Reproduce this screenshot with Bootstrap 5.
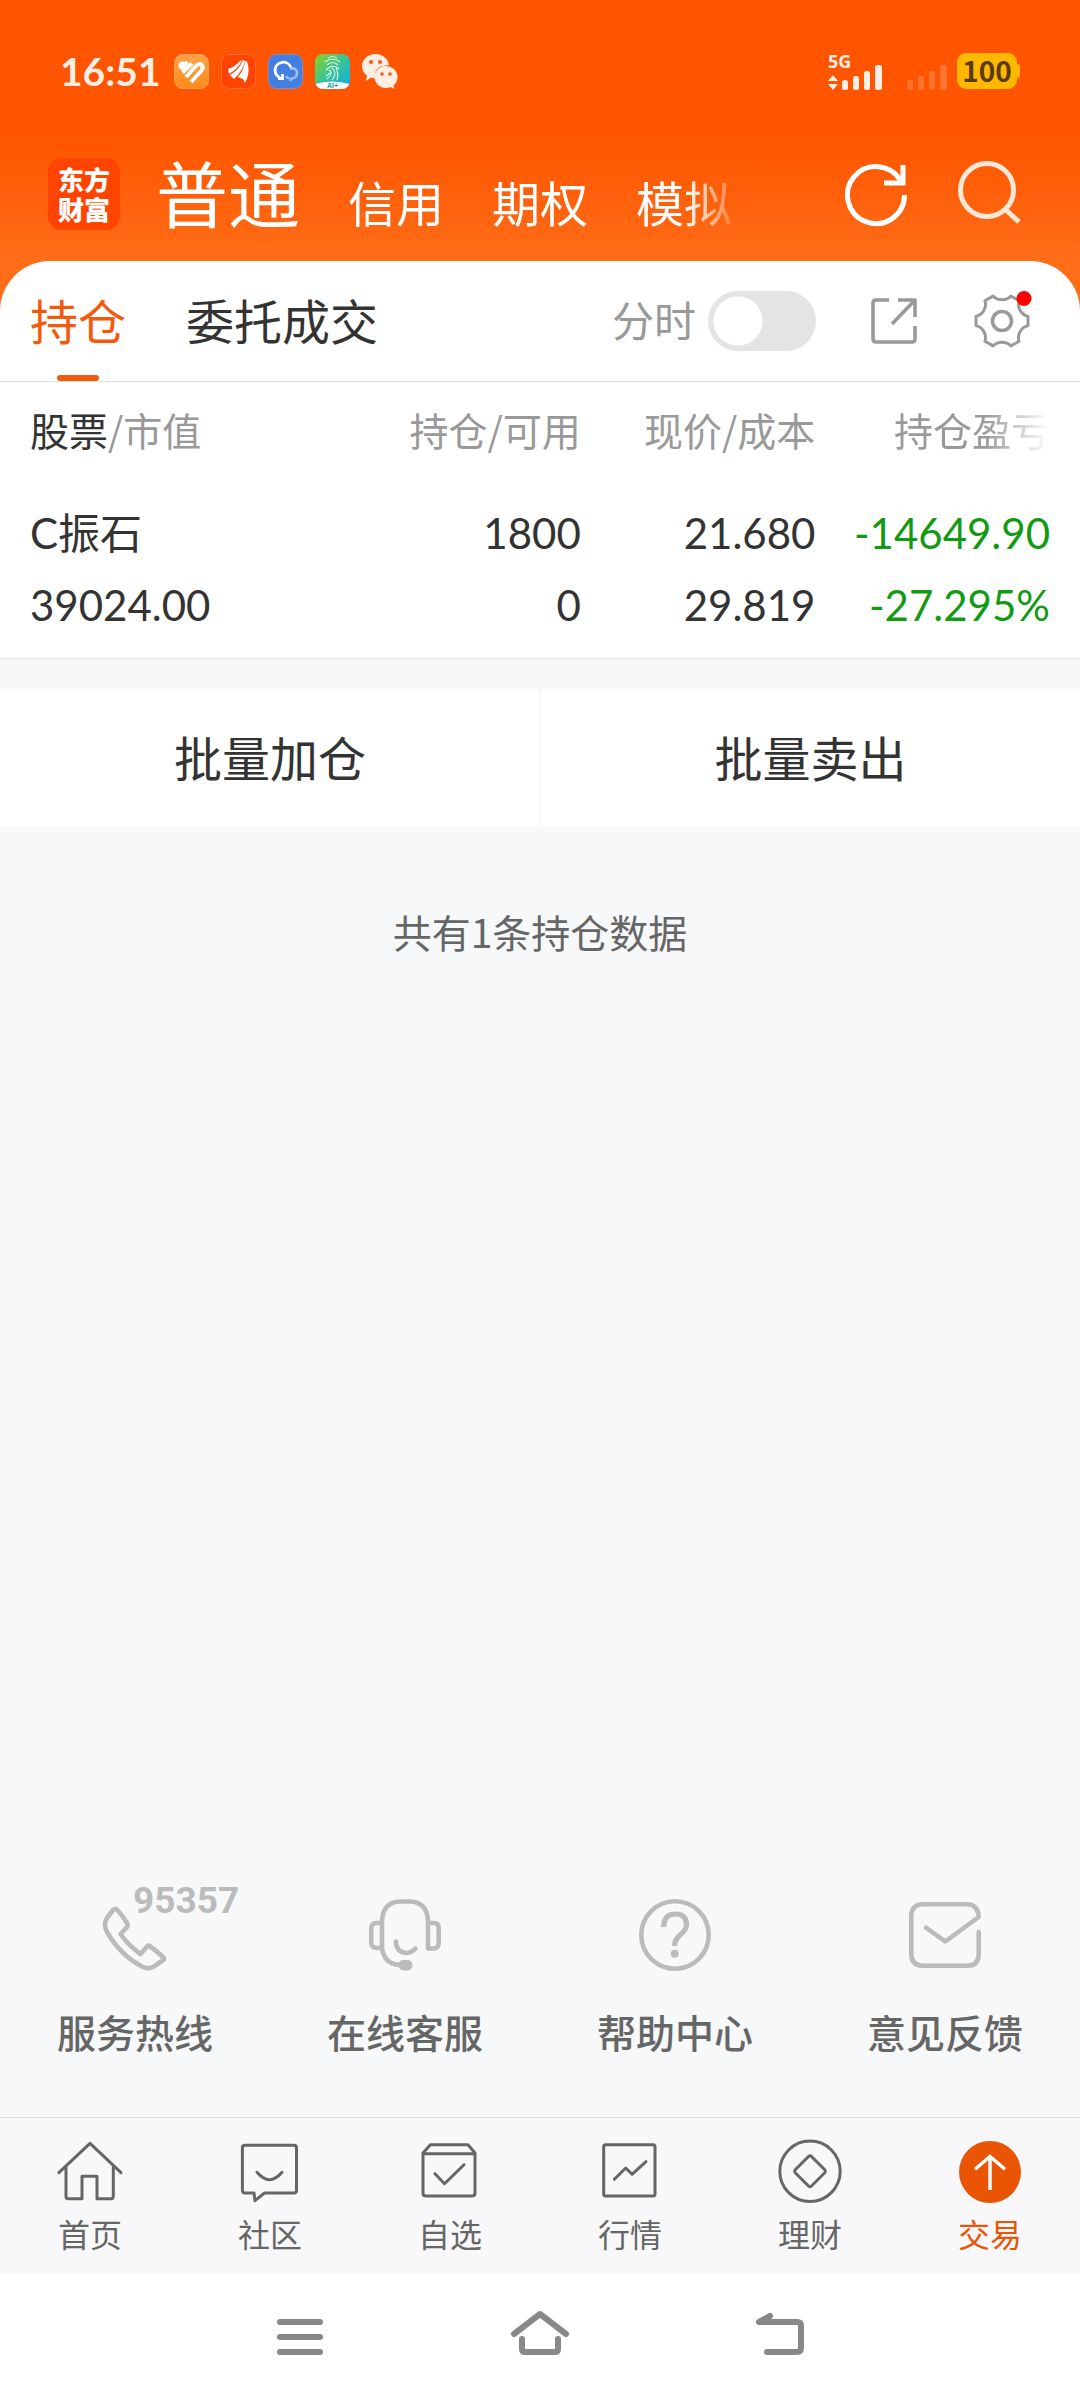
<!DOCTYPE html>
<html lang="zh-CN">
<head>
<meta charset="utf-8">
<meta name="viewport" content="width=device-width, initial-scale=1">
<title>交易 - 持仓</title>
<link href="https://cdn.jsdelivr.net/npm/bootstrap@5.3.0/dist/css/bootstrap.min.css" rel="stylesheet">
<style>
:root{--ink:#333;--muted:#999;--accent:#f25a0c;--page:#f7f8fa}
body{font-family:"Noto Sans CJK SC",sans-serif;color:var(--ink);background:var(--page);line-height:1.25}
a{color:inherit;text-decoration:none}
svg{display:block;flex:none;overflow:visible}
.num{font-family:Lato,"Noto Sans CJK SC",sans-serif}
.stroke{fill:none;stroke:currentColor;stroke-linecap:round;stroke-linejoin:round}
/* header */
.app-head{background:linear-gradient(#f50 0,#f50 140px,#ff6d18 260px);padding-bottom:65px;color:#fff}
.status{height:142px;padding:0 60px}
.clock{font-size:39px;font-weight:700;line-height:40px;color:#ffeee4;width:114px}
.status-icons{gap:12px}
.signal{color:#ffeee4;gap:9px;margin-right:3px}
.net{font:700 18px/18px "Noto Sans",sans-serif}
.battery{width:60px;height:36px;border-radius:9px;background:#ffb800;color:#5a3a00;font-size:28px;font-weight:700;line-height:34px;position:relative}
.battery::after{content:"";position:absolute;right:-3px;top:11px;width:6px;height:14px;border-radius:3px;background:#ffb800}
.title-row{height:104px;padding:0 57px 0 48px}
.logo{width:72px;height:72px;border-radius:14px;background:#f40;font-size:26px;line-height:30px;font-weight:900}
.accounts{gap:48px;font-size:48px;line-height:104px;margin-left:36px;width:588px;padding-top:3px;overflow:hidden;white-space:nowrap;
 -webkit-mask-image:linear-gradient(90deg,#000 90%,transparent);mask-image:linear-gradient(90deg,#000 90%,transparent)}
.accounts .on{font-size:72px}
.tools{gap:48px}
.plain{border:0;background:none;padding:0;color:inherit}
/* panel */
.panel{background:#fff;border-radius:50px 50px 0 0;margin-top:-50px;border-bottom:1px solid #e9e9eb}
.tab-row{height:121px;padding:0 48px 0 30px;border-bottom:1px solid #dedede}
.tab-row nav{gap:60px;font-size:48px}
.tab-row nav a{line-height:116px;height:120px;position:relative}
.tab-row nav .on{color:var(--accent)}
.tab-row nav .on::after{content:"";position:absolute;left:50%;bottom:0;width:42px;height:6px;margin-left:-21px;border-radius:3px;background:var(--accent)}
.mini{font-size:42px;color:var(--muted);gap:12px}
.mini label{padding-bottom:4px}
.mini .form-check-input{width:108px;height:60px;margin:0;border:0;border-radius:30px;background:#e4e4e6 radial-gradient(circle at 30px 30px,#fff 24px,#e4e4e6 25px)}
.mini .form-check-input:checked{background:var(--accent) radial-gradient(circle at 78px 30px,#fff 24px,var(--accent) 25px)}
.grey{color:var(--muted)}
.holdings{padding:0 30px;height:276px}
.holdings table{width:100%;table-layout:fixed}
.holdings th{font-size:39px;font-weight:400;line-height:48px;padding:23px 0 44px;color:var(--muted);white-space:nowrap}
.holdings .key{color:var(--ink)}
.holdings td{font-size:42px;line-height:72px;padding:0}
.holdings .fade-out{-webkit-mask-image:linear-gradient(90deg,#000 72%,transparent);mask-image:linear-gradient(90deg,#000 72%,transparent)}
.holdings .loss{color:#139a13}
/* actions */
.batch{margin-top:30px;background:#fff}
.batch .btn{font-size:48px;line-height:60px;padding:37px 0 41px;border:0;border-radius:0;color:var(--ink)}
.batch .btn+.btn{border-left:1px solid #f4f4f5}
.total{font-size:39px;line-height:48px;margin-top:80px;color:#666}
/* service */
.service{color:#bbb;padding-bottom:62px}
.service span{font-size:39px;line-height:48px;font-weight:500;color:#666;margin-top:36px}
.service .hot{position:absolute;left:calc(50% - 2px);top:-16px;font:700 37px/36px Roboto,sans-serif;color:#bbb;margin:0}
/* bottom */
.tabbar{background:#f8f8fa;border-top:1px solid #dedede;height:157px;padding-top:21px;color:#666}
.tabbar span{font-size:32px;line-height:40px;margin-top:10px}
.tabbar .on{color:#ea5504}
.sysbar{height:126px;background:#fff;color:#888;gap:176px}
</style>
</head>
<body class="d-flex flex-column min-vh-100">
<header class="app-head">
 <div class="status d-flex align-items-center">
  <div class="clock num">16:51</div>
  <div class="status-icons d-flex">
   <svg width="35" height="35" viewBox="0 0 35 35"><defs><linearGradient id="or" x2="0" y2="1"><stop stop-color="#ffa24a"/><stop offset="1" stop-color="#ff8a1c"/></linearGradient></defs><rect x=".5" y=".5" width="34" height="34" rx="8" fill="url(#or)" stroke="#ff9c50"/><g stroke="#fff" stroke-width="4" fill="none"><path d="M6 14.500L13.500 8"/><path d="M8.500 18.500L18 9.500"/><path d="M12 23L21.500 12.500Q25 8.500 27.800 11Q30 13.500 27 17L17 28"/></g><circle cx="8.500" cy="11.500" r="4" fill="#fff"/></svg>
   <svg width="35" height="35" viewBox="0 0 35 35"><rect x=".5" y=".5" width="34" height="34" rx="8" fill="#ff4300" stroke="#ff6a38"/><g fill="#fff"><path d="M7 15Q15 12 19 7L21 6Q18 14 8 20Z"/><path d="M9 21Q19 15 21.500 6.500L24 6.500Q22 17 13 25Z"/><path d="M17 23Q23 16 24 7L26 7.500Q30 18 24 29L22 25Z"/></g></svg>
   <svg width="35" height="35" viewBox="0 0 35 35"><rect x=".5" y=".5" width="34" height="34" rx="8" fill="#437fe0" stroke="#7a8fd0"/><path d="M22 14.500Q29 13.500 29 19T23 24.500L22 27M18 22Q19 24 21 24" fill="none" stroke="#9dbcf2" stroke-width="2.600"/><path d="M14 25Q7 22 7 16A8.300 8.300 0 0 1 23 13.500M14.500 20V24.500L10 24.500" fill="none" stroke="#fff" stroke-width="2.800"/></svg>
   <svg width="35" height="35" viewBox="0 0 35 35"><defs><linearGradient id="gr" x2="1" y2="1"><stop stop-color="#8fd21f"/><stop offset=".45" stop-color="#3fc58e"/><stop offset="1" stop-color="#09a9f0"/></linearGradient><clipPath id="rc"><rect width="35" height="35" rx="8"/></clipPath></defs><g clip-path="url(#rc)"><rect width="35" height="35" fill="url(#gr)"/><path d="M0 30Q17 25 35 30V35H0Z" fill="#fff"/></g><g fill="none" stroke="#dffbe9" stroke-width="1.100"><path d="M13 4Q18 1 22 4M10 8Q18 2 25 8M12 11Q18 6 23 11M11 16Q18 9 24 15M14 16Q19 19 12 25M17 14Q23 19 17 26M21 14Q24 20 22 26M15 19L11 22"/></g><text x="12" y="34" font-family="Liberation Sans" font-weight="700" font-size="7" fill="#129bb5">AI+</text></svg>
   <svg width="36" height="35" viewBox="0 0 36 35"><path d="M13.500 0C6 0 0 5 0 12Q0 18 5 21.500L4 27L9 23.500Q12 24.500 13 24Q11 12 27 11C26 4 20 0 13.500 0Z" fill="#ffeee4"/><path d="M24 12C17.500 12 12.500 17 12.500 23S17.500 34 24 34Q27 34 28.500 33L32.500 35L31.500 31.500Q35.500 28 35.500 23C35.500 17 30.500 12 24 12Z" fill="#ffeee4"/><g fill="#f85a10"><circle cx="9" cy="8" r="2"/><circle cx="18" cy="8" r="2"/><circle cx="20" cy="20" r="1.800"/><circle cx="28" cy="20" r="1.800"/></g></svg>
  </div>
  <div class="signal d-flex align-items-center ms-auto">
   <div><div class="net">5G</div>
   <svg width="120" height="20" viewBox="0 18 120 20" fill="currentColor"><path d="M5 23L10 29H0ZM5 38L0 32H10Z"/><g id="bars"><rect x="14" y="28" width="6" height="10" rx="2.500"/><rect x="25" y="24" width="6" height="14" rx="2.500"/><rect x="36" y="19" width="6" height="19" rx="2.500"/><rect x="47" y="13" width="7" height="25" rx="2.500"/></g><use href="#bars" x="65" opacity=".2"/></svg></div>
   <div class="battery text-center">100</div>
  </div>
 </div>
 <div class="title-row d-flex align-items-center">
  <a href="#" class="logo d-flex align-items-center justify-content-center text-center">东方<br>财富</a>
  <nav class="accounts d-flex align-items-baseline"><a href="#" class="on">普通</a><a href="#">信用</a><a href="#">期权</a><a href="#">模拟</a></nav>
  <div class="tools d-flex ms-auto">
   <button class="plain" aria-label="刷新"><svg width="66" height="66" viewBox="0 0 66 66" fill="none" stroke="#fff" stroke-width="5"><path d="M61.500 34A28.500 28.500 0 1 1 57.500 19.500"/><path d="M60 4V22H41"/></svg></button>
   <button class="plain" aria-label="搜索"><svg width="66" height="66" viewBox="0 0 66 66" fill="none" stroke="#ffe8d8" stroke-width="5"><circle cx="30" cy="29" r="26.500"/><path d="M48 48L62 61"/></svg></button>
  </div>
 </div>
</header>

<section class="panel">
 <div class="tab-row d-flex align-items-center">
  <nav class="d-flex"><a href="#" class="on">持仓</a><a href="#">委托成交</a></nav>
  <div class="mini d-flex align-items-center ms-auto"><label for="mini">分时</label><input class="form-check-input" type="checkbox" role="switch" id="mini"></div>
  <button class="plain grey ms-5" aria-label="分享"><svg width="60" height="60" viewBox="0 0 60 60" fill="none" stroke="currentColor" stroke-width="3.600"><path d="M25 9H12Q9 9 9 12V48Q9 51 12 51H48Q51 51 51 48V35M34 9H51V26M51 9L28 33" stroke-linejoin="round"/></svg></button>
  <button class="plain grey ms-5" aria-label="设置"><svg width="60" height="60" viewBox="0 0 60 60" class="stroke" stroke-width="3"><path d="M56 34.600A12.500 12.500 0 0 0 47 50.300L39 54.900A13 13 0 0 0 21 54.900L13 50.300A12.500 12.500 0 0 0 4 34.600V25.400A12.500 12.500 0 0 0 13 9.700L21 5.100A13 13 0 0 0 39 5.100L47 9.700A12.500 12.500 0 0 0 56 25.400Z"/><circle cx="30" cy="30" r="9.500" stroke-width="3.600"/><circle cx="52" cy="7.500" r="7.500" fill="red" stroke="none"/></svg></button>
 </div>
 <div class="holdings">
  <table>
   <colgroup><col style="width:26%"><col style="width:28%"><col style="width:23%"><col style="width:23%"></colgroup>
   <thead><tr><th><span class="key">股票</span>/市值</th><th class="text-end">持仓/可用</th><th class="text-end">现价/成本</th><th class="text-end fade-out">持仓盈亏</th></tr></thead>
   <tbody class="num">
    <tr><td>C振石</td><td class="text-end">1800</td><td class="text-end">21.680</td><td class="text-end loss">-14649.90</td></tr>
    <tr><td>39024.00</td><td class="text-end">0</td><td class="text-end">29.819</td><td class="text-end loss">-27.295%</td></tr>
   </tbody>
  </table>
 </div>
</section>

<div class="batch d-flex"><button class="btn col-6">批量加仓</button><button class="btn col-6">批量卖出</button></div>
<p class="total text-center mb-0">共有1条持仓数据</p>

<div class="service row g-0 mt-auto">
 <a href="#" class="col-3 d-flex flex-column align-items-center position-relative"><svg width="72" height="72" viewBox="0 0 72 72" class="stroke" stroke-width="4.600"><path d="M14 11L8 19Q4 25 8 33Q22 57 44 68Q51 71 57 66L65 60.500V59Q58 52 50 46.500H49L41.500 55Q30 47 21.500 35L28.500 27.500V25Q24 17 18 10.500Q16 9 14 11Z"/></svg><b class="hot">95357</b><span>服务热线</span></a>
 <a href="#" class="col-3 d-flex flex-column align-items-center"><svg width="72" height="72" viewBox="0 0 72 72" class="stroke" stroke-width="4.600"><path d="M13 49V22Q14 3 31 2.500H41Q58 3 59 22V49.500H65Q69.700 49 69.700 44V29Q69.700 24 65 24H59M13 24H8Q2.300 24 2.300 29V44Q2.300 49 8 49H13Q15 65 31 66M27 42.500Q27 53 37 54Q42 54 46.500 49.700"/><rect x="29.500" y="61" width="14" height="10.500" rx="5" fill="currentColor" stroke="none"/></svg><span>在线客服</span></a>
 <a href="#" class="col-3 d-flex flex-column align-items-center"><svg width="72" height="72" viewBox="0 0 72 72" class="stroke" stroke-width="4.600"><circle cx="36" cy="36" r="33.700"/><path d="M24.600 28Q24.600 15 36.500 15Q47.500 15 47.500 26Q47.500 31 41 36Q35.500 41 35.500 47" stroke-width="5.200" stroke-linecap="butt"/><circle cx="35.700" cy="54.700" r="4" fill="currentColor" stroke="none"/></svg><span>帮助中心</span></a>
 <a href="#" class="col-3 d-flex flex-column align-items-center"><svg width="72" height="72" viewBox="0 0 72 72" class="stroke" stroke-width="4.600"><path d="M69.700 33V56Q69 66.500 59 66.700H13Q3 66 2.300 56V16Q3 6 13 5.300H59Q69 6 69.700 18L36.300 42.500L17 28.700"/></svg><span>意见反馈</span></a>
</div>

<nav class="tabbar row g-0">
 <a href="#" class="col-2 d-flex flex-column align-items-center"><svg width="64" height="64" viewBox="0 0 64 64" class="stroke" stroke-width="3"><path d="M.9 33.700L32 4.300L63 33.700M8 28.300V57Q8 59.700 10 59.700H24V37.300H39V59.700H53Q55.300 59.700 55.300 57V28.300"/></svg><span>首页</span></a>
 <a href="#" class="col-2 d-flex flex-column align-items-center"><svg width="64" height="64" viewBox="0 0 64 64" class="stroke" stroke-width="3"><path d="M7 6.300H56Q58.500 6.300 58.500 9V51Q58.500 54 56 54H26.500L17 61.700L16 54H7Q4.400 54 4.400 51V9Q4.400 6.300 7 6.300ZM19 33.300Q31.500 48 44 33.300"/></svg><span>社区</span></a>
 <a href="#" class="col-2 d-flex flex-column align-items-center"><svg width="64" height="64" viewBox="0 0 64 64" class="stroke" stroke-width="3"><path d="M5 14.700H57V54Q57 57 54 57H8Q5 57 5 54V14L12.400 5.700H50L57 14M17 34.700L26.500 44.700L46 25.700"/></svg><span>自选</span></a>
 <a href="#" class="col-2 d-flex flex-column align-items-center"><svg width="64" height="64" viewBox="0 0 64 64" class="stroke" stroke-width="3"><rect x="5.700" y="5.700" width="51.300" height="51.300" rx="2"/><path d="M16.400 40.300L27.700 29L34 35.300L48 22.700"/></svg><span>行情</span></a>
 <a href="#" class="col-2 d-flex flex-column align-items-center"><svg width="64" height="64" viewBox="0 0 64 64" class="stroke" stroke-width="3"><circle cx="32" cy="32.300" r="30.200"/><path d="M30.500 17.500Q32 16 33.500 17.500L47 31Q48 32.300 47 33.500L33.500 47Q32 48.500 30.500 47L17 33.500Q16 32.300 17 31Z"/></svg><span>理财</span></a>
 <a href="#" class="col-2 d-flex flex-column align-items-center on"><svg width="64" height="64" viewBox="0 0 64 64"><circle cx="32" cy="33" r="31" fill="#ea5504"/><path d="M32 51V18M17 30.300L32 17.500L47 30.300" fill="none" stroke="#fff" stroke-width="3.400"/></svg><span>交易</span></a>
</nav>
<div class="sysbar d-flex align-items-center justify-content-center">
 <button class="plain" aria-label="菜单"><svg width="64" height="64" viewBox="0 0 64 64" class="stroke" stroke-width="6"><path d="M12 17H52M12 32H52M12 47H52"/></svg></button>
 <button class="plain" aria-label="主页"><svg width="64" height="64" viewBox="0 0 64 64" class="stroke" stroke-width="6"><path d="M6 29L32 9L58 29M14 34V44Q14 47 17 47H47Q50 47 50 44V34"/></svg></button>
 <button class="plain" aria-label="返回"><svg width="64" height="64" viewBox="0 0 64 64" class="stroke" stroke-width="6"><path d="M22 11L11 17H49Q53 17 53 21V43Q53 47 49 47H19"/></svg></button>
</div>
<script src="https://cdn.jsdelivr.net/npm/bootstrap@5.3.0/dist/js/bootstrap.bundle.min.js"></script>
</body>
</html>
